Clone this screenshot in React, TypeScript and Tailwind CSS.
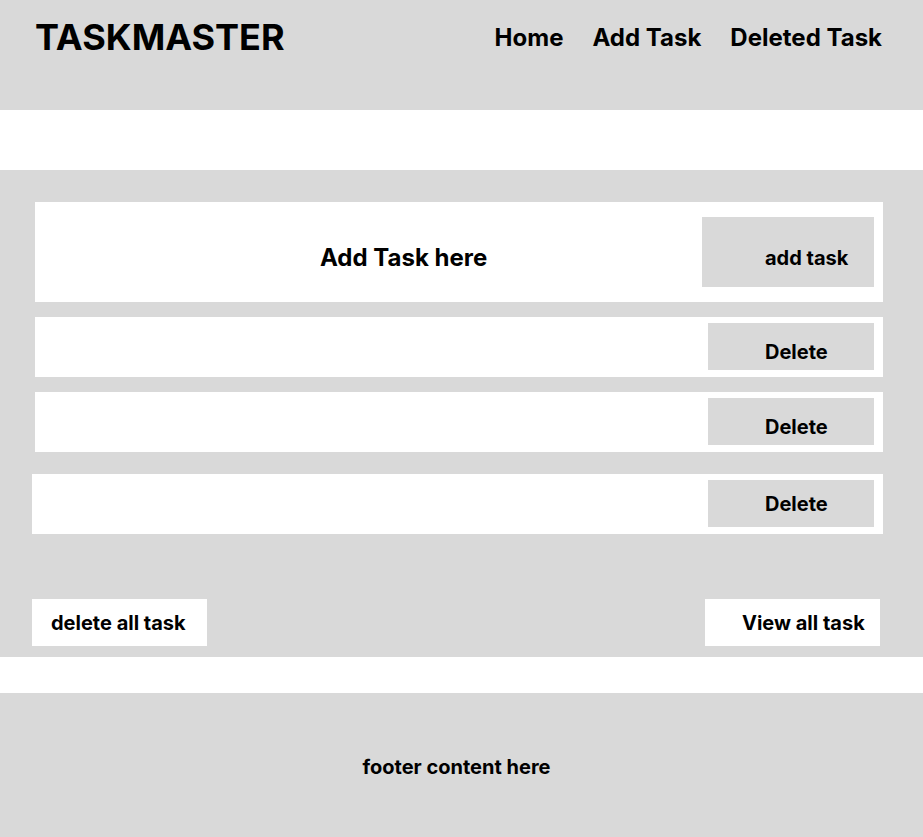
export default function App() {
  const rows = [
    { id: 1, wrap: 'ml-[35px] mr-[40px] mt-[15px]', text: 'pt-[10px]' },
    { id: 2, wrap: 'ml-[35px] mr-[40px] mt-[15px]', text: 'pt-[10px]' },
    { id: 3, wrap: 'ml-[32px] mr-[40px] mt-[22px]', text: 'pt-0' },
  ];

  return (
    <div className="w-full bg-white text-black" style={{ fontFamily: 'Inter, "Noto Sans", sans-serif' }}>
      {/* Header */}
      <header className="h-[110px] bg-[#d9d9d9] flex items-start justify-between pl-[35px] pr-[41px]">
        <h1 className="mt-[19px] text-[36px] leading-none font-bold">TASKMASTER</h1>
        <nav className="mt-[26px] flex gap-[29px] text-[24px] leading-none font-bold">
          <a>Home</a>
          <a>Add Task</a>
          <a>Deleted Task</a>
        </nav>
      </header>

      <div className="h-[60px]" />

      {/* Task panel */}
      <main className="h-[487px] bg-[#d9d9d9] pt-8">
        <div className="ml-[35px] mr-[40px] h-[100px] bg-white flex items-center justify-between pr-[9px]">
          <span className="pl-[285px] pt-[12px] text-[24px] font-bold">Add Task here</span>
          <button className="w-[172px] h-[70px] bg-[#d9d9d9] text-left pl-[63px] pt-[11px] text-[20px] font-bold">
            add task
          </button>
        </div>

        {rows.map(r => (
          <div key={r.id} className={`${r.wrap} h-[60px] bg-white flex justify-end pt-[6px] pr-[9px]`}>
            <button className={`${r.text} w-[166px] h-[47px] bg-[#d9d9d9] text-left pl-[57px] text-[20px] font-bold`}>
              Delete
            </button>
          </div>
        ))}

        <div className="mt-[65px] flex justify-between pl-[32px] pr-[43px]">
          <button className="w-[175px] h-[47px] bg-white text-left pl-[19px] text-[20px] font-bold">
            delete all task
          </button>
          <button className="w-[175px] h-[47px] bg-white text-left pl-[37px] text-[20px] font-bold">
            View all task
          </button>
        </div>
      </main>

      <div className="h-[36px]" />

      {/* Footer */}
      <footer className="h-[144px] bg-[#d9d9d9] flex items-center justify-center pr-[10px] pt-[4px]">
        <p className="text-[20px] font-bold">footer content here</p>
      </footer>
    </div>
  );
}
